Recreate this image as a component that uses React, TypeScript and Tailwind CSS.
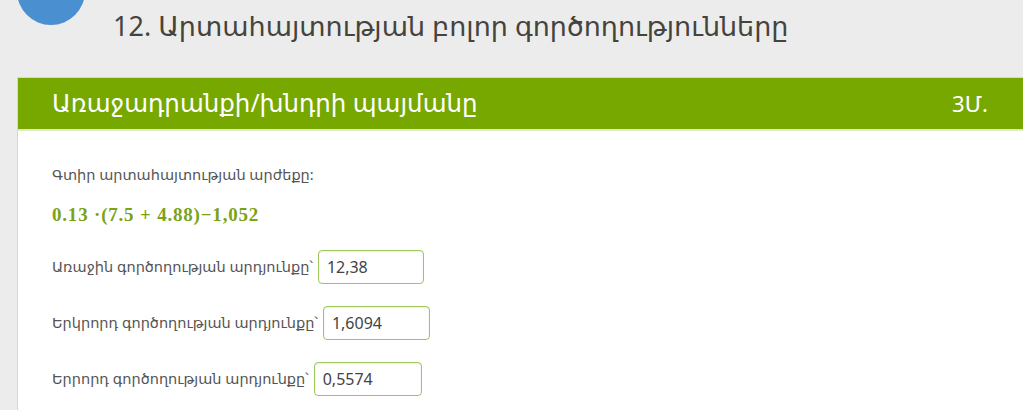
import React from "react";

const font = { fontFamily: '"Noto Sans", "DejaVu Sans", sans-serif' };

function Row({ label, value, w }: { label: string; value: string; w: string }) {
  return (
    <div className="flex items-center h-[34px]">
      <span className="text-[14.5px] text-[#555]">{label}</span>
      <div className={`ml-[5px] h-[34px] ${w} border border-[#9ec65a] rounded-[4px] bg-white flex items-center pl-[8px] text-[16px] text-[#444] shadow-[inset_0_1px_2px_rgba(0,0,0,0.08)]`}>
        {value}
      </div>
    </div>
  );
}

export default function App() {
  return (
    <div className="w-[1023px] h-[410px] bg-[#ececec] overflow-hidden relative" style={font}>
      <div className="absolute left-[17px] top-[-43px] w-[68px] h-[68px] rounded-full bg-[#4a8fd0]" />
      <div className="pl-[113px] pt-[6px] h-[77px]">
        <h1 className="text-[27px] leading-[40px] text-[#45443c] font-normal">
          12. Արտահայտության բոլոր գործողությունները
        </h1>
      </div>
      <div className="ml-[17px] w-[1020px] h-[340px] bg-white border-l border-t border-[#d6d6d6]">
        <div className="h-[53px] bg-[#76a800] flex items-center justify-between pl-[34px] pr-[49px] text-white border-b-2 border-[#dfe8cf]">
          <span className="text-[24.5px]">Առաջադրանքի/խնդրի պայմանը</span>
          <span className="text-[22px]">3Մ.</span>
        </div>
        <div className="pl-[34px] pt-[33px]">
          <div className="text-[14.5px] text-[#555] leading-[20px]">Գտիր արտահայտության արժեքը:</div>
          <div
            className="mt-[20px] text-[19px] leading-[22px] text-[#7ba314] font-bold tracking-[0.8px] whitespace-pre"
            style={{ fontFamily: '"Liberation Serif", "DejaVu Serif", serif' }}
          >
            {"0.13 ·(7.5 + 4.88)−1,052"}
          </div>
          <div className="mt-[24px] flex flex-col gap-[22px]">
            <Row label="Առաջին գործողության արդյունքը՝" value="12,38" w="w-[106px]" />
            <Row label="Երկրորդ գործողության արդյունքը՝" value="1,6094" w="w-[107px]" />
            <Row label="Երրորդ գործողության արդյունքը՝" value="0,5574" w="w-[108px]" />
          </div>
        </div>
      </div>
    </div>
  );
}
